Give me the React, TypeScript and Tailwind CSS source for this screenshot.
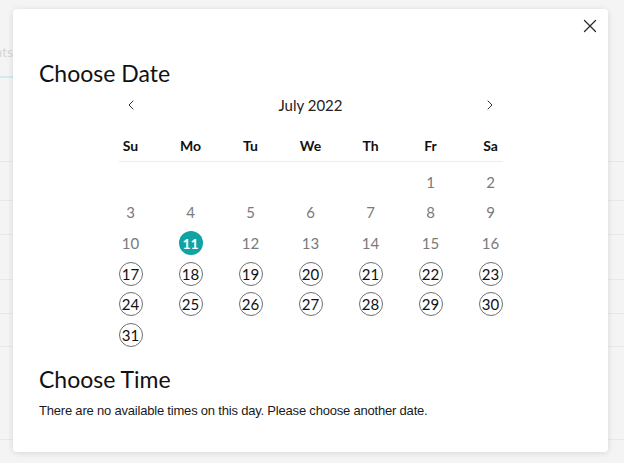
import { ChevronLeft, ChevronRight, X } from 'lucide-react';

const weekDays = ['Su', 'Mo', 'Tu', 'We', 'Th', 'Fr', 'Sa'];

// 0 = blank, days before 17 are unavailable, 11 is selected
const cells: number[] = [0, 0, 0, 0, 0, 1, 2, ...Array.from({ length: 29 }, (_, i) => i + 3)];

function DayCell({ day }: { day: number }) {
    if (!day) return <div className="h-[24px] w-[24px]" />;
    if (day === 11) {
        return (
            <div className="flex h-[24px] w-[24px] items-center justify-center rounded-full bg-[#0fa3a4] text-[14px] font-bold text-white">
                {day}
            </div>
        );
    }
    if (day < 17) {
        return (
            <div className="flex h-[24px] w-[24px] items-center justify-center text-[15px] text-[#7a7a7a]">
                {day}
            </div>
        );
    }
    return (
        <div className="flex h-[24px] w-[24px] items-center justify-center rounded-full border border-[#6f6f6f] text-[15px] text-[#111]">
            {day}
        </div>
    );
}

export default function App() {
    return (
        <div className="relative h-[463px] w-[624px] overflow-hidden bg-[#f4f4f4] font-['Lato',sans-serif]">
            {/* Page behind the modal */}
            <div className="flex flex-col">
                <div className="flex h-[76px] items-end pb-[14px]">
                    <div className="flex w-[13px] justify-end overflow-hidden whitespace-nowrap text-[14px] text-[#d6d6d6]">
                        Appointments
                    </div>
                </div>
                <div className="h-[2px] w-[13px] bg-[#d3ebeb]" />
                <div className="h-[84px] border-b border-[#e8e8e8]" />
                <div className="h-[39px] border-b border-[#e8e8e8]" />
                <div className="h-[34px] border-b border-[#e8e8e8]" />
                <div className="h-[45px] border-b border-[#e8e8e8]" />
                <div className="h-[34px] border-b border-[#e8e8e8]" />
                <div className="h-[33px] border-b border-[#e8e8e8]" />
                <div className="h-[93px] border-b border-[#e8e8e8]" />
            </div>

            {/* Modal */}
            <div className="absolute left-[13px] top-[9px] h-[443px] w-[595px] rounded-[4px] bg-white shadow-[0_1px_6px_rgba(0,0,0,0.12)]">
                <button className="absolute right-[7px] top-[6px] text-[#2b2b2b]">
                    <X size={22} strokeWidth={1.4} />
                </button>

                <div className="flex flex-col px-[26px] pt-[48px]">
                    <h2 className="text-[23px] font-normal leading-[32px] text-[#111]">Choose Date</h2>

                    <div className="mx-auto flex w-[384px] flex-col">
                        <div className="flex h-[32px] items-center justify-between">
                            <button className="flex w-[24px] justify-center text-[#333]">
                                <ChevronLeft size={16} strokeWidth={1.5} />
                            </button>
                            <span className="text-[15px] text-[#222]">July 2022</span>
                            <button className="flex w-[24px] justify-center text-[#333]">
                                <ChevronRight size={16} strokeWidth={1.5} />
                            </button>
                        </div>

                        <div className="mt-[8px] grid h-[33px] grid-cols-[repeat(7,24px)] items-center justify-between border-b border-[#ececec]">
                            {weekDays.map((d) => (
                                <div key={d} className="flex justify-center text-[14px] font-bold text-[#111]">
                                    {d}
                                </div>
                            ))}
                        </div>

                        <div className="mt-[8px] grid grid-cols-[repeat(7,24px)] justify-between gap-y-[6.6px]">
                            {cells.map((day, i) => (
                                <DayCell key={i} day={day} />
                            ))}
                        </div>
                    </div>

                    <h2 className="mt-[16px] text-[23px] font-normal leading-[32px] text-[#111]">Choose Time</h2>
                    <p className="mt-[6px] font-['Liberation_Sans',sans-serif] text-[13px] leading-[20px] tracking-[-0.2px] text-[#1a1a1a]">
                        There are no available times on this day. Please choose another date.
                    </p>
                </div>
            </div>
        </div>
    );
}
